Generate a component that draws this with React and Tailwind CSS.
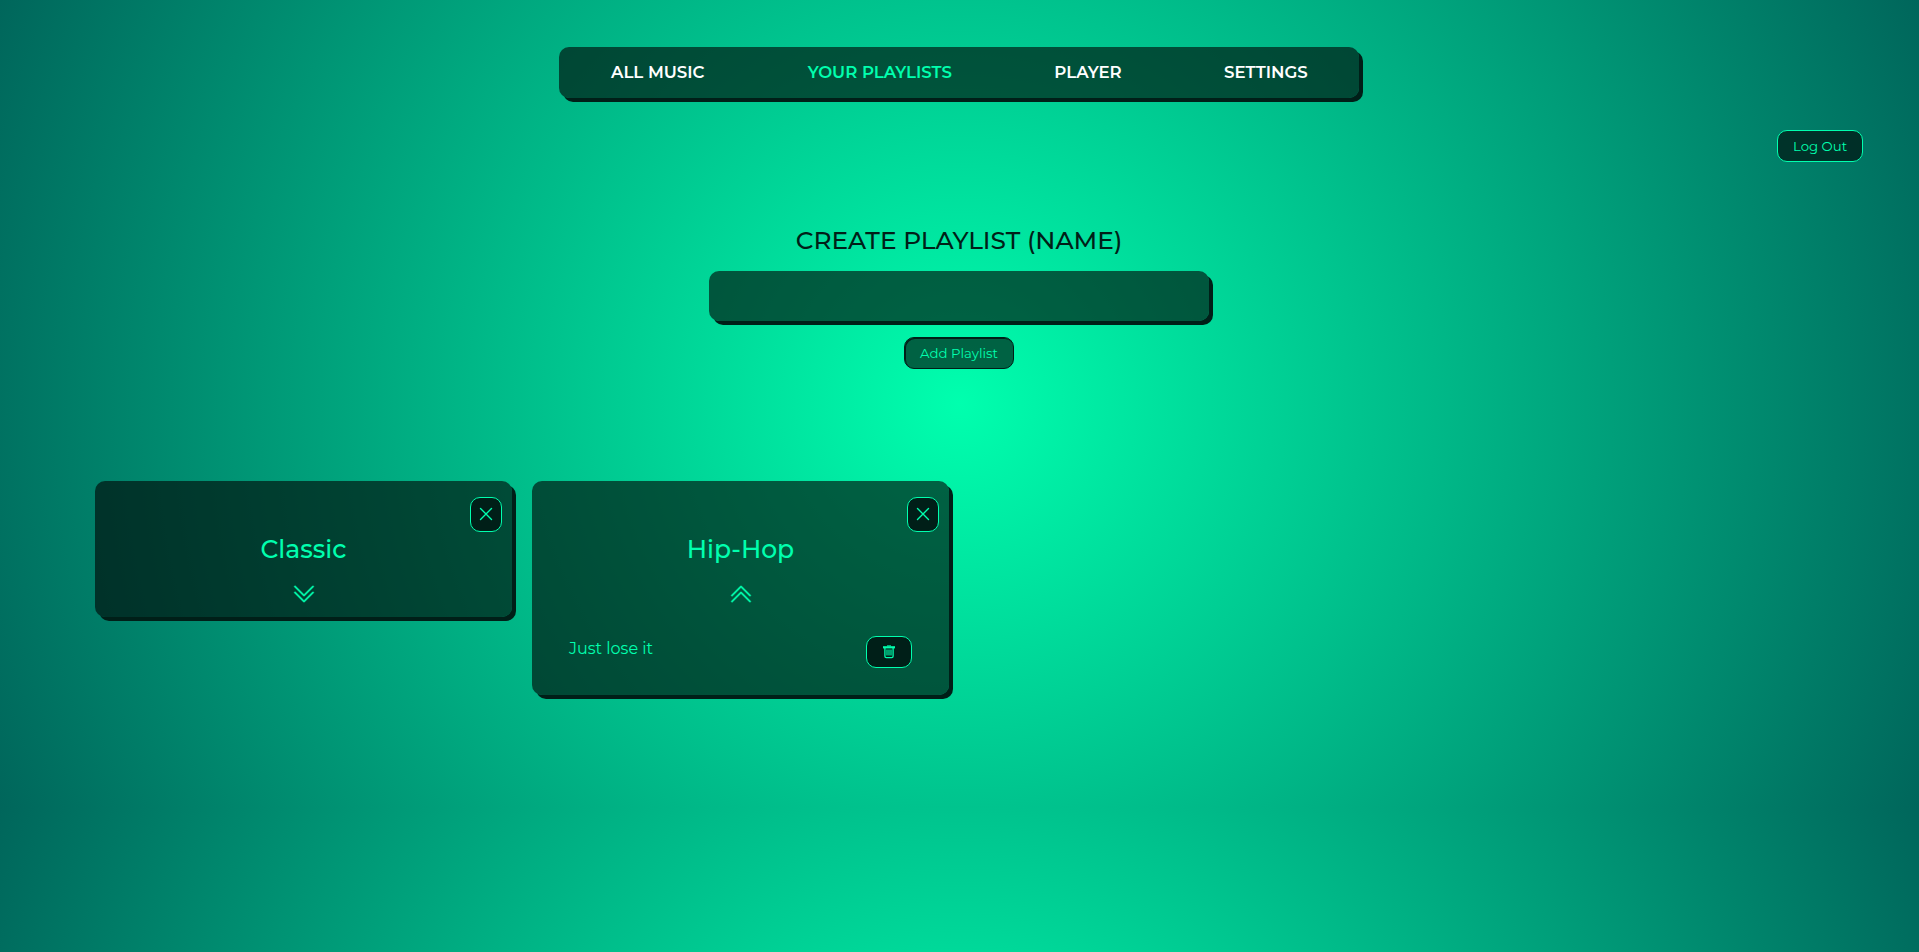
import { BsChevronDoubleDown, BsChevronDoubleUp } from "react-icons/bs";

const navItems = [
  { label: "ALL MUSIC", width: "w-[94px]" },
  { label: "YOUR PLAYLISTS", width: "w-[144px]", active: true },
  { label: "PLAYER", width: "w-[67px]" },
  { label: "SETTINGS", width: "w-[84px]" },
];

const panel = "rounded-[10px] bg-black/60 shadow-[4px_4px_0_0_#001f18]";
const button = "flex items-center justify-center rounded-[10px] border border-[#00ffae] text-[#00ffae]";

function CloseIcon() {
  return (
    <svg className="mb-0.5 shrink-0" width="14" height="14" viewBox="0 0 14 14" fill="none" stroke="currentColor" strokeWidth="1.4" strokeLinecap="round">
      <path d="M1.5 1.5l11 11M12.5 1.5l-11 11" />
    </svg>
  );
}

function TrashIcon() {
  return (
    <svg width="14" height="14" viewBox="0 0 14 14" fill="none" stroke="currentColor">
      <path d="M1 1.2h12v2.2H1z" fill="currentColor" stroke="none" />
      <path d="M5 .9h4" strokeWidth="1" />
      <path d="M2.9 3v8.2q0 1.4 1.4 1.4h5.4q1.4 0 1.4-1.4V3" strokeWidth="1.3" />
      <path d="M5 4.6v6M7 4.6v6M9 4.6v6" strokeWidth="1.15" />
    </svg>
  );
}

function Card({ title, open, songs = [] }) {
  const Chevron = open ? BsChevronDoubleUp : BsChevronDoubleDown;
  return (
    <article className={`${panel} w-[417px] px-[10px] pt-4 ${open ? "h-[214px]" : "h-[136px]"}`}>
      <div className="flex justify-end">
        <button className={`${button} h-[35px] w-8 bg-[#001f18]`}>
          <CloseIcon />
        </button>
      </div>
      <h2 className="mt-[2px] text-center text-[25px] leading-[30px] font-medium">{title}</h2>
      <div className="mt-[18px] flex justify-center pl-px">
        <Chevron className="stroke-[0.3]" size={24} />
      </div>
      {songs.map((song) => (
        <div key={song} className="mt-[30px] flex items-start justify-between pr-[27px] pl-[27px]">
          <span className="mt-[3px] text-base leading-5">{song}</span>
          <button className={`${button} h-8 w-[46px] bg-[#001f18]`}>
            <TrashIcon />
          </button>
        </div>
      ))}
    </article>
  );
}

export default function App() {
  return (
    <div className="flex h-[952px] w-full flex-col overflow-hidden bg-[radial-gradient(circle,#00ffae,#00665b)] bg-[length:100%_807px] bg-repeat-y pt-[47px] font-['Montserrat','Inter',sans-serif] text-[#00ffae]">
      <div className="flex justify-center pr-px">
        <nav className={`${panel} flex h-[51px] w-[800px] items-center justify-between pr-[51px] pl-[52px] text-[16.6px] font-semibold`}>
          {navItems.map(({ label, width, active }) => (
            <a key={label} className={`${width} whitespace-nowrap ${active ? "" : "text-white"}`}>
              {label}
            </a>
          ))}
        </nav>
      </div>
      <div className="mt-8 flex justify-end pr-14">
        <button className={`${button} h-8 w-[86px] bg-black/60 pt-px text-[13.3px]`}>Log Out</button>
      </div>
      <form className="mt-[63px] flex flex-col items-center pr-px">
        <label className="text-[24.8px] leading-[30px] font-medium text-[#001f18]">CREATE PLAYLIST (NAME)</label>
        <input className={`${panel} mt-4 h-[50px] w-[500px] px-4 outline-none`} />
        <button type="button" className="mt-4 h-8 w-[110px] rounded-[10px] border border-[#001f18] bg-black/60 pt-px text-[13.3px] shadow-[inset_1px_1px_0_0_#001f18]">
          Add Playlist
        </button>
      </form>
      <section className="mt-28 flex items-start gap-5 pl-[95px]">
        <Card title="Classic" />
        <Card title="Hip-Hop" open songs={["Just lose it"]} />
      </section>
    </div>
  );
}
